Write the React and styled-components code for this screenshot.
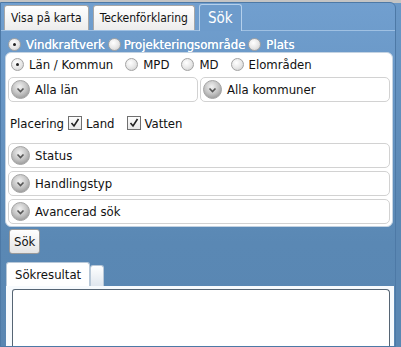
import { styled, createGlobalStyle } from 'styled-components';

const GlobalStyle = createGlobalStyle`
  html, body {
    margin: 0;
    padding: 0;
    background: #5a87b3;
    overflow: hidden;
  }
  body {
    font-family: "DejaVu Sans Condensed", "DejaVu Sans", Tahoma, sans-serif;
    font-size: 13px;
    color: #111;
  }
`;

const Page = styled.div`
  width: 401px;
  height: 347px;
  background: linear-gradient(#c4c4c4 0 3px, #6a98c7 3px, #5a87b3 60%);
  padding-top: 2px;
  box-sizing: border-box;
  overflow: hidden;
`;

const Panel = styled.div`
  width: 396px;
  height: 345px;
  box-sizing: border-box;
  background: linear-gradient(#719fcf, #5a88b4 70%, #5986b2);
  border: 1px solid #4d79a6;
  border-top-right-radius: 6px;
  display: flex;
  flex-direction: column;
`;

const TabBar = styled.div`
  display: flex;
  gap: 4px;
  padding: 0 3px;
  height: 27px;
  border-bottom: 1px solid #9fc0e2;
  align-items: flex-end;
`;

const Tab = styled.div`
  height: ${(p) => (p.$active ? '27px' : '25px')};
  padding: 0 ${(p) => (p.$active ? '8px' : '6px')};
  display: flex;
  align-items: center;
  box-sizing: border-box;
  font-size: ${(p) => (p.$active ? '15px' : '12px')};
  color: ${(p) => (p.$active ? '#fff' : '#111')};
  background: ${(p) =>
    p.$active ? '#6d9bcb' : 'linear-gradient(#ffffff, #ececec)'};
  border: 1px solid ${(p) => (p.$active ? '#b4d0ec' : '#a7a7a7')};
  border-bottom: none;
  border-radius: 3px 3px 0 0;
  margin-bottom: ${(p) => (p.$active ? '-1px' : '0')};
`;

const TypeRow = styled.div`
  display: flex;
  align-items: center;
  padding: 5px 0 0 7px;
  height: 16px;
  color: #fff;
  font-size: 13px;
  text-shadow: 0 0 0.4px #fff;
`;

const Radio = styled.span`
  display: inline-block;
  width: 13px;
  height: 13px;
  border-radius: 50%;
  border: 1px solid #a3a3a3;
  background: radial-gradient(circle at 40% 35%, #ffffff, #e6e6e6 55%, #c6c6c6);
  box-sizing: border-box;
  position: relative;
  flex: none;
  &::after {
    content: '';
    display: ${(p) => (p.$checked ? 'block' : 'none')};
    position: absolute;
    left: 4px;
    top: 4px;
    width: 3px;
    height: 3px;
    border-radius: 50%;
    background: #222;
  }
`;

const Option = styled.label`
  display: inline-flex;
  align-items: center;
  gap: ${(p) => p.$inner || 5}px;
  margin-right: ${(p) => p.$gap || 8}px;
`;

const Inner = styled.div`
  margin: 0 2px 0 4px;
  background: #fff;
  border: 1px solid #c4d3e2;
  border-radius: 6px;
  padding: 3px 2px 2px 2px;
  display: flex;
  flex-direction: column;
`;

const AreaRow = styled.div`
  display: flex;
  align-items: center;
  height: 16px;
  padding-left: 3px;
`;

const SelectRow = styled.div`
  display: grid;
  grid-template-columns: 1fr 1fr;
  gap: 2px;
  margin-top: 5px;
`;

const DropBox = styled.div`
  height: 25px;
  border: 1px solid #d2d2d2;
  border-radius: 5px;
  display: flex;
  align-items: center;
  gap: 5px;
  padding-left: 2px;
  box-sizing: border-box;
  background: #fff;
`;

const PlaceRow = styled.div`
  display: flex;
  align-items: center;
  height: 22px;
  margin: 10px 0 9px;
  padding-left: 2px;
`;

const PlaceLabel = styled.span`
  margin-right: 4px;
`;

const Check = styled.span`
  display: inline-block;
  width: 14px;
  height: 14px;
  border: 1px solid #707070;
  box-sizing: border-box;
  background: linear-gradient(#fdfdfd, #e8e8e8);
  flex: none;
  svg {
    display: block;
  }
`;

const Accordions = styled.div`
  display: flex;
  flex-direction: column;
  gap: 3px;
`;

const SearchButton = styled.button`
  align-self: flex-start;
  margin: 2px 0 0 8px;
  height: 25px;
  padding: 0 4px;
  font-family: inherit;
  font-size: 13px;
  color: #111;
  background: linear-gradient(#ffffff, #e4e4e4);
  border: 1px solid #9a9a9a;
  border-radius: 3px;
`;

const ResultTabs = styled.div`
  display: flex;
  align-items: flex-end;
  margin: 8px 0 0 5px;
  height: 24px;
`;

const ResultTab = styled.div`
  height: ${(p) => (p.$small ? '21px' : '24px')};
  width: ${(p) => (p.$small ? '14px' : 'auto')};
  padding: ${(p) => (p.$small ? '0' : '0 8px')};
  display: flex;
  align-items: center;
  box-sizing: border-box;
  background: ${(p) => (p.$small ? 'linear-gradient(#ffffff, #dfe6ee)' : '#fff')};
  border: 1px solid #b8c8d8;
  border-bottom: none;
  border-radius: 3px 3px 0 0;
`;

const ResultBody = styled.div`
  flex: 1;
  margin: 0 1px 0 5px;
  background: #f7fafd;
  padding: 3px 4px 0 6px;
  display: flex;
`;

const ResultBox = styled.div`
  flex: 1;
  background: #fff;
  border: 1px solid #566574;
  border-bottom: none;
  border-radius: 3px 4px 0 0;
`;

function Chevron() {
  return (
    <svg width="19" height="19" viewBox="0 0 19 19">
      <defs>
        <radialGradient id="chv" cx="45%" cy="35%" r="65%">
          <stop offset="0%" stopColor="#f2f2f2" />
          <stop offset="60%" stopColor="#c4c4c4" />
          <stop offset="100%" stopColor="#9c9c9c" />
        </radialGradient>
      </defs>
      <circle cx="9.5" cy="9.5" r="9" fill="url(#chv)" stroke="#a5a5a5" />
      <path d="M6.5 8.5 L9.5 11.5 L12.5 8.5" fill="none" stroke="#555" strokeWidth="1.6" />
    </svg>
  );
}

function CheckMark() {
  return (
    <svg width="12" height="12" viewBox="0 0 12 12">
      <path d="M2.5 6 L5 9 L9.5 2" fill="none" stroke="#222" strokeWidth="1.6" />
    </svg>
  );
}

function Drop({ label }) {
  return (
    <DropBox>
      <Chevron />
      {label}
    </DropBox>
  );
}

export default function App() {
  return (
    <Page>
      <GlobalStyle />
      <Panel>
        <TabBar>
          <Tab>Visa på karta</Tab>
          <Tab>Teckenförklaring</Tab>
          <Tab $active>Sök</Tab>
        </TabBar>

        <TypeRow>
          <Option $gap={3}>
            <Radio $checked />
            Vindkraftverk
          </Option>
          <Option $gap={3} $inner={3}>
            <Radio />
            Projekteringsområde
          </Option>
          <Option>
            <Radio />
            Plats
          </Option>
        </TypeRow>

        <Inner>
          <AreaRow>
            <Option $gap={12}>
              <Radio $checked />
              Län / Kommun
            </Option>
            <Option $gap={12}>
              <Radio />
              MPD
            </Option>
            <Option $gap={12}>
              <Radio />
              MD
            </Option>
            <Option>
              <Radio />
              Elområden
            </Option>
          </AreaRow>

          <SelectRow>
            <Drop label="Alla län" />
            <Drop label="Alla kommuner" />
          </SelectRow>

          <PlaceRow>
            <PlaceLabel>Placering</PlaceLabel>
            <Option $gap={12} $inner={4}>
              <Check>
                <CheckMark />
              </Check>
              Land
            </Option>
            <Option $inner={4}>
              <Check>
                <CheckMark />
              </Check>
              Vatten
            </Option>
          </PlaceRow>

          <Accordions>
            <Drop label="Status" />
            <Drop label="Handlingstyp" />
            <Drop label="Avancerad sök" />
          </Accordions>
        </Inner>

        <SearchButton>Sök</SearchButton>

        <ResultTabs>
          <ResultTab>Sökresultat</ResultTab>
          <ResultTab $small />
        </ResultTabs>
        <ResultBody>
          <ResultBox />
        </ResultBody>
      </Panel>
    </Page>
  );
}
